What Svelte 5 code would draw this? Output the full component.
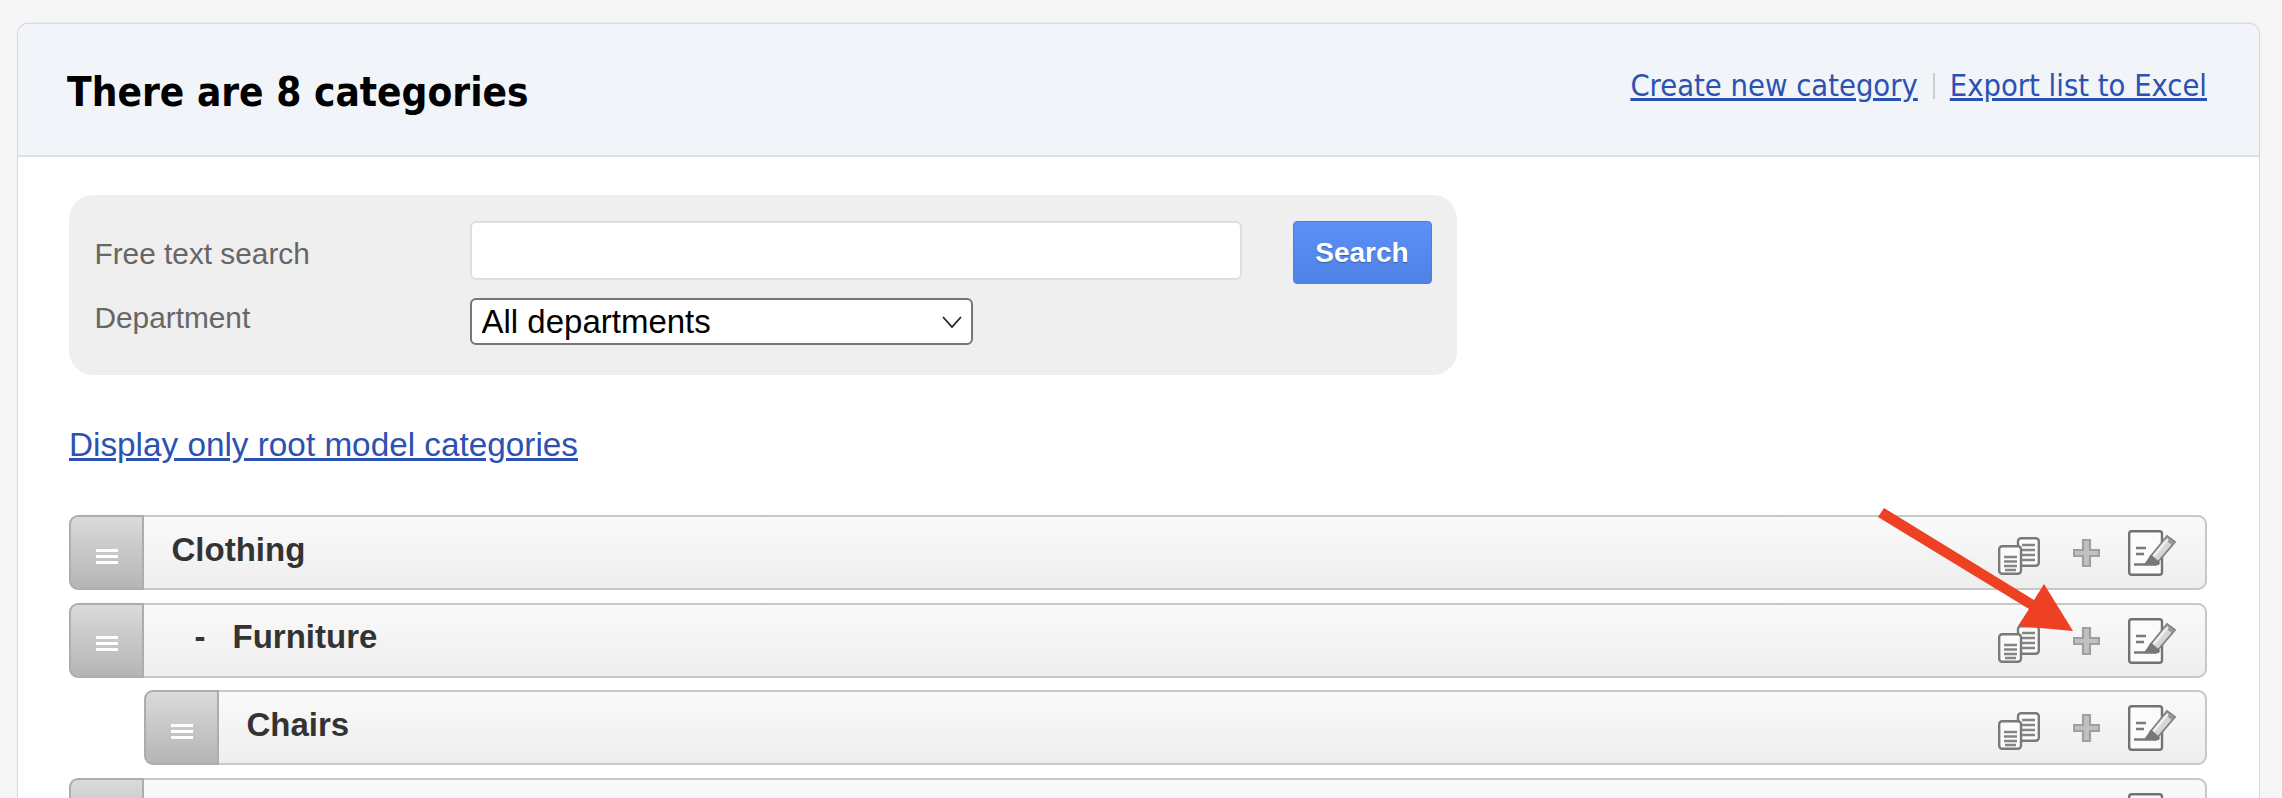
<script>
  const rows = [
    { name: 'Clothing', child: false, dash: false },
    { name: 'Furniture', child: false, dash: true },
    { name: 'Chairs', child: true, dash: false },
    { name: '', child: false, dash: false }
  ];
</script>

<div class="page">
  <main class="card">
    <header class="head">
      <h1>There are 8 categories</h1>
      <nav class="links">
        <a href="#create">Create new category</a>
        <span class="sep"></span>
        <a href="#export">Export list to Excel</a>
      </nav>
    </header>

    <section class="content">
      <form class="panel">
        <label class="lab lab1" for="q">Free text search</label>
        <input id="q" class="text" type="text" />
        <button class="btn" type="button">Search</button>
        <label class="lab lab2" for="d">Department</label>
        <select id="d" class="sel">
          <option>All departments</option>
        </select>
      </form>

      <a class="root" href="#root">Display only root model categories</a>

      <ul class="list">
        {#each rows as r}
          <li class="row" class:child={r.child}>
            <div class="handle"><i></i><i></i><i></i></div>
            <div class="body">
              {#if r.dash}<span class="dash">-</span>{/if}
              <span class="name" class:nested={r.dash}>{r.name}</span>
              <div class="icons">
                <svg class="ic-copy" viewBox="0 0 42 38" width="42" height="38">
                  <rect x="20" y="1.200" width="20.800" height="27.600" rx="3" fill="#fbfbfb" stroke="#7a7a7a" stroke-width="2.400" />
                  <path d="M24 8h13M24 13h13M24 18h13M24 23h13" stroke="#858585" stroke-width="2.400" />
                  <rect x="1.200" y="9.200" width="21.800" height="27.600" rx="3" fill="#fbfbfb" stroke="#7a7a7a" stroke-width="2.400" />
                  <path d="M6 20h13M6 24.500h13M6 29h13M7 33h11" stroke="#858585" stroke-width="2.400" />
                </svg>
                <svg class="ic-plus" viewBox="0 0 27 28" width="27" height="28">
                  <path d="M10 1h7v10h9v6h-9v10h-7v-10h-9v-6h9z" fill="#c0c0c0" stroke="#a0a0a0" stroke-width="2.200" />
                </svg>
                <svg class="ic-edit" viewBox="0 0 48 46" width="48" height="46">
                  <rect x="1.200" y="1.200" width="32.800" height="43.600" rx="2.500" fill="#fbfbfb" stroke="#727272" stroke-width="2.400" />
                  <path d="M8 18h10M8 24h8M6 34.500h23" stroke="#7a7a7a" stroke-width="2.400" />
                  <path d="M22 27l17-21 8 6-18 21z" fill="#d6d6d6" stroke="#808080" stroke-width="1.800" />
                  <path d="M38 8l7 5.500" stroke="#999" stroke-width="4" />
                  <path d="M25 27l15-18" stroke="#f2f2f2" stroke-width="2" />
                  <path d="M16 34.500l7-10 9 8-1 2.500z" fill="#777" />
                </svg>
              </div>
            </div>
          </li>
        {/each}
      </ul>
    </section>
  </main>

  <svg class="arrow" viewBox="0 0 2282 798" width="2282" height="798" aria-hidden="true">
    <polygon points="1884,508 2034,600 2044,584 2073,631 2018,626 2029,609 1878,517" fill="#ee4023" />
  </svg>
</div>

<style>
  :global(html), :global(body) {
    margin: 0;
    height: 798px;
    overflow: hidden;
    background: #f6f6f6;
  }
  .page {
    position: relative;
    height: 798px;
    overflow: hidden;
    padding: 24px 23px 0 18px;
    box-sizing: border-box;
    font-family: "Liberation Sans", Arial, sans-serif;
  }
  .card {
    background: #fff;
    border-radius: 10px 10px 0 0;
    box-shadow: 0 0 0 1px #d9d9dc, 0 -1px 2px #d5d5d8;
    height: 800px;
  }
  .head {
    height: 133px;
    box-sizing: border-box;
    padding: 5px 52px 0 49px;
    display: flex;
    align-items: center;
    justify-content: space-between;
    background: #f1f4f9;
    border-bottom: 2px solid #dde0e8;
    border-radius: 10px 10px 0 0;
  }
  h1 {
    margin: 0;
    font: bold 40.200px "DejaVu Sans", sans-serif;
    font-stretch: condensed;
    color: #000;
  }
  .links {
    display: flex;
    align-items: center;
    gap: 15px;
    padding-bottom: 13px;
    font: 30.600px "DejaVu Sans", sans-serif;
    font-stretch: condensed;
  }
  a { color: #2b52b1; }
  .sep {
    width: 2px;
    height: 26px;
    background: #ccc;
  }
  .content {
    padding: 38px 52px 0 51px;
  }
  .panel {
    width: 1388px;
    height: 180px;
    box-sizing: border-box;
    padding: 26px 24px 0 25.500px;
    background: #efefef;
    border-radius: 24px;
    display: grid;
    grid-template-columns: 375px 772px 51px 139px;
    grid-template-rows: 63px 47px;
    row-gap: 14px;
    align-items: start;
  }
  .lab {
    font-size: 29.800px;
    color: #666;
    line-height: 34px;
    grid-column: 1;
  }
  .lab1 { margin-top: 16px; }
  .lab2 { margin-top: 3px; }
  .text {
    grid-column: 2;
    height: 59px;
    box-sizing: border-box;
    border: 2px solid #dedede;
    border-radius: 6px;
    background: #fff;
    padding: 0;
  }
  .btn {
    grid-column: 4;
    height: 63px;
    padding: 0;
    border: 1px solid #4a7ee0;
    border-radius: 4px;
    background: linear-gradient(#5c90f6, #4e82e6);
    color: #fff;
    font: bold 28px "Liberation Sans", sans-serif;
    text-shadow: 0 1px 1px rgba(0,0,0,.3);
  }
  .sel {
    grid-column: 2;
    width: 503px;
    height: 47px;
    box-sizing: border-box;
    appearance: none;
    border: 2px solid #767676;
    border-radius: 6px;
    padding: 0 0 0 10px;
    color: #000;
    font: 33px "Liberation Sans", sans-serif;
    background: #fff url("data:image/svg+xml,%3Csvg xmlns='http://www.w3.org/2000/svg' width='20' height='12'%3E%3Cpath d='M1 1l9 10 9-10' fill='none' stroke='%23222' stroke-width='1.800'/%3E%3C/svg%3E") no-repeat right 9px center;
  }
  .root {
    display: block;
    width: fit-content;
    margin-top: 51px;
    font-size: 33.300px;
    line-height: 38px;
  }
  .list {
    list-style: none;
    margin: 51px 0 0;
    padding: 0;
  }
  .row {
    display: flex;
    height: 75px;
    margin-bottom: 12.500px;
  }
  .row.child { margin-left: 75px; }
  .handle {
    width: 75px;
    flex: none;
    box-sizing: border-box;
    border: 2px solid #adadad;
    border-radius: 9px 0 0 9px;
    background: linear-gradient(#dadada, #b5b5b5);
    display: flex;
    flex-direction: column;
    align-items: center;
    justify-content: center;
    gap: 3px;
    padding-top: 7px;
  }
  .handle i {
    display: block;
    width: 22px;
    height: 3px;
    background: #fff;
  }
  .body {
    flex: 1;
    display: flex;
    align-items: flex-start;
    box-sizing: border-box;
    border: 2px solid #c8c8c8;
    border-left: 0;
    border-radius: 0 9px 9px 0;
    background: linear-gradient(#fafafa, #eeeeee);
    padding: 0 29px 0 27.500px;
    color: #333;
    font-size: 33px;
    font-weight: bold;
  }
  .name { margin-top: 13.500px; line-height: 38px; }
  .dash {
    margin: 13.500px 0 0 23px;
    line-height: 38px;
  }
  .nested { margin-left: 27px; }
  .icons {
    margin-left: auto;
    height: 71px;
    display: flex;
    align-items: flex-start;
  }
  .icons svg { filter: blur(.4px); flex: none; }
  .ic-copy { margin-top: 20px; }
  .ic-plus { margin: 22px 0 0 33px; }
  .ic-edit { margin: 13px 0 0 28px; }
  .arrow {
    position: absolute;
    left: 0;
    top: 0;
    pointer-events: none;
  }
</style>
